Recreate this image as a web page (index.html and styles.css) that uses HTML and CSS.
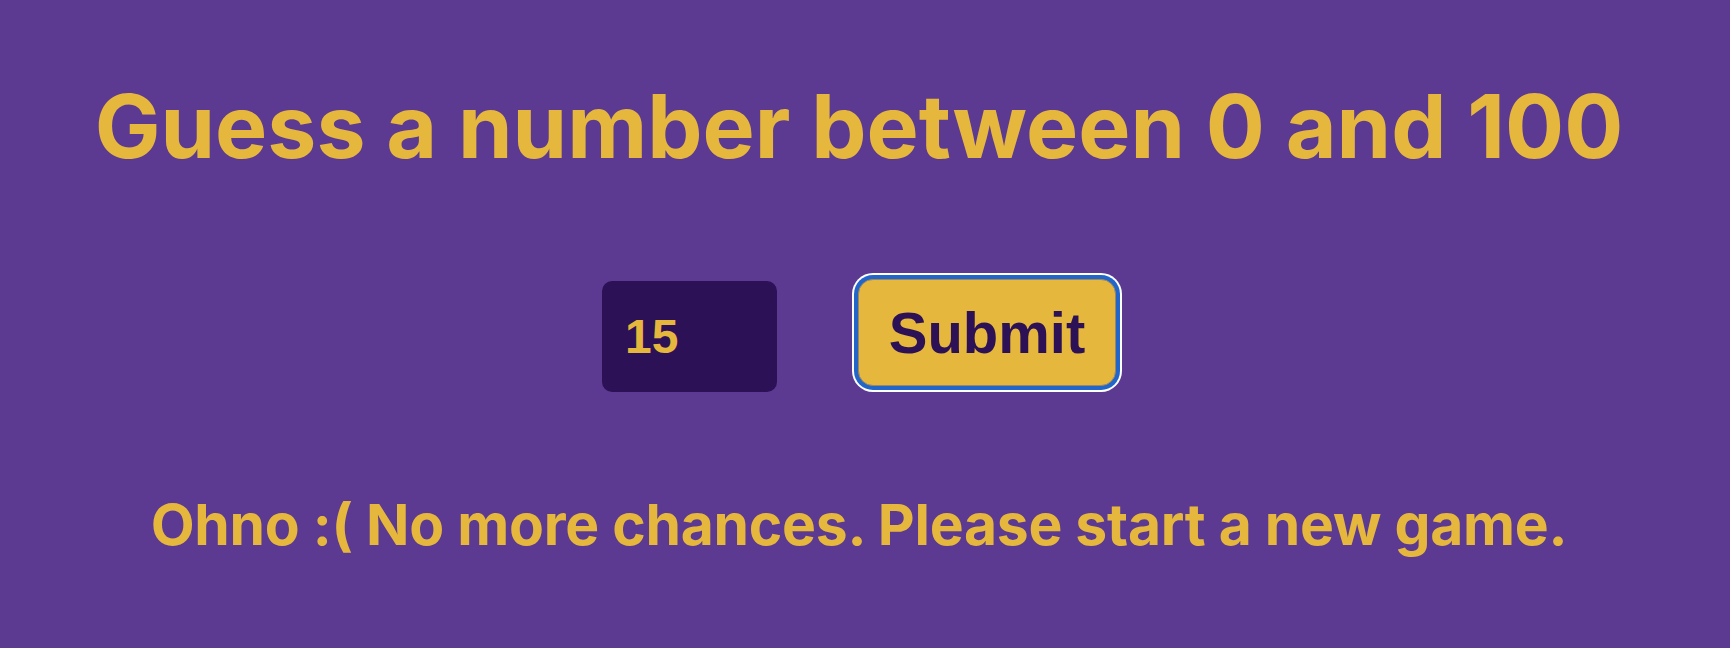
FILE: index.html
```html
<!DOCTYPE html>
<html lang="en">
<head>
<meta charset="utf-8">
<title>Guess a number</title>
<link rel="stylesheet" href="styles.css">
</head>
<body>
<main class="game">
  <h1 class="title">Guess a number between 0 and 100</h1>
  <form class="controls">
    <input class="guess" type="text" value="15">
    <button class="submit" type="button">Submit</button>
  </form>
  <p class="message">Ohno :( No more chances. Please start a new game.</p>
</main>
</body>
</html>
```
FILE: styles.css
```css
html, body {
  margin: 0;
  padding: 0;
  background: #5c3a92;
}
body {
  width: 1730px;
  height: 648px;
  overflow: hidden;
}
.game {
  display: flex;
  flex-direction: column;
  align-items: center;
  padding-right: 12px;
}
.title {
  margin: 73px 0 0;
  font-family: Inter, "Liberation Sans", sans-serif;
  font-weight: 700;
  font-size: 87.7px;
  line-height: normal;
  color: #e6b73d;
  white-space: nowrap;
}
.controls {
  margin: 100px 0 0;
  display: flex;
  align-items: baseline;
  gap: 81px;
}
.guess {
  box-sizing: border-box;
  width: 175px;
  height: 111px;
  padding: 0 23px;
  border: none;
  border-radius: 10px;
  background: #2d1157;
  color: #e6b73d;
  font-family: "Liberation Sans", Arial, sans-serif;
  font-weight: 700;
  font-size: 48px;
  outline: none;
}
.submit {
  box-sizing: border-box;
  width: 258px;
  height: 107px;
  padding: 0;
  border: 1px solid #9a8766;
  border-radius: 15px;
  background: #e6b73d;
  color: #2d1157;
  font-family: "Liberation Sans", Arial, sans-serif;
  font-weight: 700;
  font-size: 58px;
  box-shadow: 0 0 0 4px #2266c9, 0 0 0 6px #ffffff;
}
.message {
  margin: 98px 0 0;
  font-family: Inter, "Liberation Sans", sans-serif;
  font-weight: 700;
  font-size: 57px;
  letter-spacing: -0.25px;
  line-height: normal;
  color: #e6b73d;
  white-space: nowrap;
}
```
